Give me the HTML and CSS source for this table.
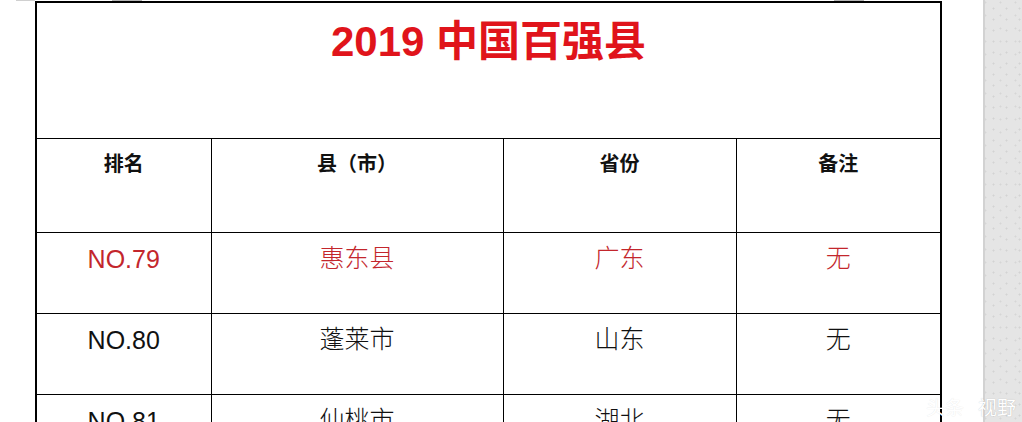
FILE: index.html
```html
<!DOCTYPE html>
<html lang="zh">
<head>
<meta charset="utf-8">
<title>2019 中国百强县</title>
<link rel="stylesheet" href="styles.css">
</head>
<body>
<div class="screen">
  <main class="doc">
    <div class="marks">
      <span class="mark mark-a"></span>
      <span class="mark mark-b"></span>
      <span class="mark mark-c"></span>
    </div>
    <table class="sheet">
      <colgroup>
        <col class="c1"><col class="c2"><col class="c3"><col class="c4">
      </colgroup>
      <tr class="title-row">
        <td colspan="4" class="title">2019 中国百强县</td>
      </tr>
      <tr class="head-row">
        <th>排名</th><th>县（市）</th><th>省份</th><th>备注</th>
      </tr>
      <tr class="row hl">
        <td class="num">NO.79</td><td>惠东县</td><td>广东</td><td>无</td>
      </tr>
      <tr class="row">
        <td class="num">NO.80</td><td>蓬莱市</td><td>山东</td><td>无</td>
      </tr>
      <tr class="row">
        <td class="num">NO.81</td><td>仙桃市</td><td>湖北</td><td>无</td>
      </tr>
    </table>
  </main>
  <aside class="scroll"></aside>
  <div class="watermark"><span class="wm-dim">头条</span>视野</div>
</div>
</body>
</html>
```

FILE: styles.css
```css
html, body {
  margin: 0;
  padding: 0;
  background: #ffffff;
  overflow: hidden;
}
.screen {
  position: relative;
  display: flex;
  width: 1022px;
  height: 422px;
  overflow: hidden;
}
.doc {
  width: 983px;
  flex: none;
  background: #ffffff;
}
.marks {
  display: flex;
  height: 1px;
}
.mark {
  height: 1px;
  background: #b4b4b4;
}
.mark-a { margin-left: 16px; width: 19px; background: #d0d0d0; }
.mark-b { margin-left: 77px; width: 30px; }
.mark-c { margin-left: 692px; width: 30px; }

.sheet {
  margin-left: 35px;
  width: 905px;
  border-collapse: collapse;
  table-layout: fixed;
  font-family: "Liberation Sans", "Noto Sans CJK SC", sans-serif;
  color: #111;
  border: 2px solid #000;
}
.c1 { width: 175px; }
.c2 { width: 292px; }
.c3 { width: 233px; }
.c4 { width: 205px; }
.sheet td, .sheet th {
  border: 1px solid #000;
  text-align: center;
  vertical-align: top;
  padding: 0;
}
.title-row { height: 136px; }
.sheet .title {
  padding-top: 14px;
  font-size: 42px;
  line-height: 50px;
  font-weight: bold;
  color: #e0141b;
}
.head-row { height: 94px; }
.head-row th {
  padding-top: 12px;
  font-size: 20px;
  line-height: 24px;
  font-weight: bold;
  color: #111;
  font-family: "Noto Sans CJK SC", "Liberation Sans", sans-serif;
}
.row { height: 81px; }
.row td {
  padding-top: 8px;
  font-size: 25px;
  line-height: 30px;
  font-family: "Noto Sans CJK SC", sans-serif;
  font-weight: 300;
}
.row td.num {
  padding-top: 11px;
  font-family: "Liberation Sans", sans-serif;
  font-weight: normal;
}
.row.hl td { color: #c3262c; }

.scroll {
  flex: 1;
  border-left: 2px solid #d2d2d2;
  background-color: #e5e5e5;
  background-image:
    radial-gradient(circle, #d3d3d3 0.8px, transparent 1.2px),
    radial-gradient(circle, #d6d6d6 0.8px, transparent 1.2px);
  background-size: 13px 11px, 15px 13px;
  background-position: 2px 3px, 8px 9px;
}
.watermark {
  position: absolute;
  right: 6px;
  bottom: 2px;
  font-family: "Noto Sans CJK SC", sans-serif;
  font-size: 19px;
  color: #ffffff;
  text-shadow: 0 0 1px rgba(0,0,0,0.25);
}
.wm-dim {
  margin-right: 14px;
  text-shadow: 0 0 1px rgba(0,0,0,0.12);
}
```
